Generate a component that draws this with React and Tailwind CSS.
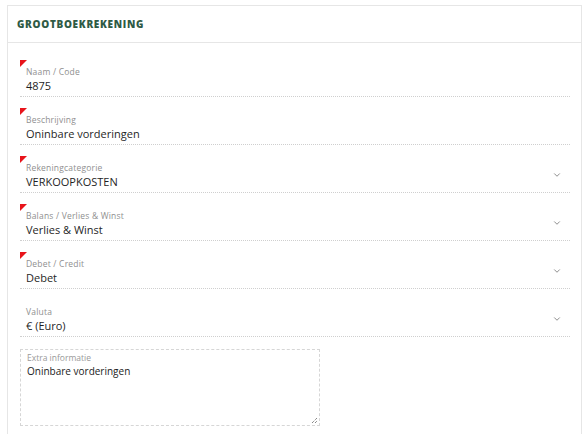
import { ChevronDown } from "lucide-react";

const fields = [
  { label: "Naam / Code", value: "4875", required: true },
  { label: "Beschrijving", value: "Oninbare vorderingen", required: true },
  { label: "Rekeningcategorie", value: "VERKOOPKOSTEN", required: true, select: true },
  { label: "Balans / Verlies & Winst", value: "Verlies & Winst", required: true, select: true },
  { label: "Debet / Credit", value: "Debet", required: true, select: true },
  { label: "Valuta", value: "€ (Euro)", select: true },
];

export default function App() {
  return (
    <div className="min-h-screen bg-white pt-[5px] pl-[7px] pr-[5px] font-['Open_Sans',sans-serif]">
      <div className="border border-[#e6e6e6] border-b-0 h-[429px] overflow-hidden">
        {/* Header */}
        <div className="h-[37px] flex items-center px-[9px] border-b border-[#e6e6e6]">
          <h1 className="text-[10px] font-extrabold tracking-[0.7px] text-[#2f5a45] uppercase">
            Grootboekrekening
          </h1>
        </div>

        <div className="pl-[12px] pr-[11px] pt-[6px]">
          {fields.map((f) => (
            <Field key={f.label} {...f} />
          ))}

          <div className="mt-[12px] w-[300px] h-[77px] border border-dashed border-[#d6d6d6] relative px-[6px] pt-[2px]">
            <p className="text-[8.5px] text-[#999] leading-[12px]">Extra informatie</p>
            <p className="text-[10px] text-[#222] leading-[14px]">Oninbare vorderingen</p>
            <svg className="absolute right-[1px] bottom-[1px]" width="7" height="7" viewBox="0 0 7 7">
              <path d="M1 6 L6 1 M4 6 L6 4" stroke="#555" strokeWidth="1" strokeDasharray="1 1" />
            </svg>
          </div>
        </div>
      </div>
    </div>
  );
}

function Field({ label, value, required, select }) {
  return (
    <div className="relative h-[48px] border-b border-dotted border-[#cfcfcf] flex">
      {required && (
        <div className="absolute left-0 top-[11px] w-0 h-0 border-t-[7px] border-t-[#e8141b] border-r-[7px] border-r-transparent" />
      )}
      <div className="pl-[6px] pt-[17px] flex-1">
        <p className="text-[8.5px] tracking-[0.2px] text-[#8f8f8f] leading-[12px]">{label}</p>
        <p className="text-[11px] text-[#1f1f1f] leading-[15px]">{value}</p>
      </div>
      {select && (
        <ChevronDown className="mr-[8px] mt-[25px] text-[#777]" size={10} strokeWidth={2} />
      )}
    </div>
  );
}
